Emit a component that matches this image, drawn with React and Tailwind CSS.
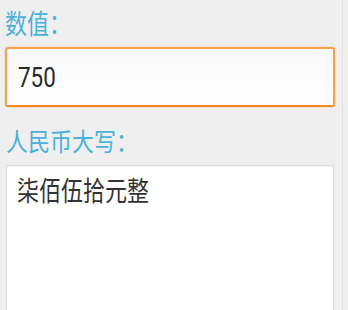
export default function App() {
  const cjk = { fontFamily: '"Roboto", "Noto Sans CJK SC", sans-serif' };
  return (
    <div className="w-[348px] h-[310px] overflow-hidden bg-[#efefef] flex" style={cjk}>
      <div className="flex-1 flex flex-col pl-[5px] pr-[7px]">
        <div className="mt-[10px] h-[30px] flex items-center text-[22px] leading-none text-[#4ab2da]">
          <span className="inline-block scale-y-[1.22]">数值：</span>
        </div>
        <div className="mt-[7px] h-[60px] w-[330px] rounded-[3px] border-2 border-[#f6a24a] border-b-[#f08a26] bg-gradient-to-b from-[#f9f9f9] to-white flex items-center pl-[11px] shadow-[0_0_2px_rgba(246,162,74,0.6)]">
          <span className="inline-block origin-left scale-x-[0.8] text-[28px] leading-none text-[#2a2a2a] mt-[2px]">750</span>
        </div>
        <div className="mt-[21px] h-[30px] flex items-center text-[22px] leading-none text-[#4ab2da] pl-[1px]">
          <span className="inline-block scale-y-[1.15]">人民币大写：</span>
        </div>
        <div className="mt-[7px] ml-[1px] w-[328px] flex-1 bg-white border border-[#dedede] border-b-0 shadow-[inset_0_1px_2px_rgba(0,0,0,0.06)] pt-[15px] pl-[10px]">
          <span className="inline-block scale-y-[1.25] text-[22px] leading-none text-[#333333]">柒佰伍拾元整</span>
        </div>
      </div>
      <div className="w-[1px] bg-[#e2e2e2] mr-[5px]" />
    </div>
  );
}
